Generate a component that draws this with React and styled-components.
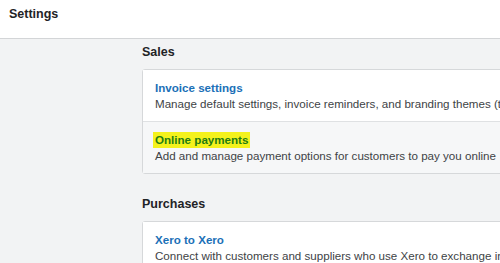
import React from "react";
import styled, { createGlobalStyle } from "styled-components";

const GlobalStyle = createGlobalStyle`
  html, body {
    margin: 0;
    padding: 0;
    overflow: hidden;
    background: #f2f3f4;
  }
  body {
    font-family: "Liberation Sans", Arial, sans-serif;
  }
`;

const sections = [
  {
    name: "Sales",
    items: [
      {
        title: "Invoice settings",
        text: "Manage default settings, invoice reminders, and branding themes (to customise invoice layouts)",
      },
      {
        title: "Online payments",
        text: "Add and manage payment options for customers to pay you online",
        active: true,
      },
    ],
  },
  {
    name: "Purchases",
    items: [
      {
        title: "Xero to Xero",
        text: "Connect with customers and suppliers who use Xero to exchange invoices and bills",
      },
    ],
  },
];

function App() {
  return (
    <Page>
      <GlobalStyle />
      <Header>
        <PageTitle>Settings</PageTitle>
      </Header>
      <Main>
        {sections.map((section) => (
          <Section key={section.name}>
            <SectionTitle>{section.name}</SectionTitle>
            <Card>
              {section.items.map((item) => (
                <Row key={item.title} $active={item.active}>
                  <RowTitle $highlight={item.active}>{item.title}</RowTitle>
                  <RowText>{item.text}</RowText>
                </Row>
              ))}
            </Card>
          </Section>
        ))}
      </Main>
    </Page>
  );
}

export default App;

const Page = styled.div`
  width: 500px;
  height: 263px;
  overflow: hidden;
  background: #f2f3f4;
`;

const Header = styled.header`
  height: 38px;
  background: #fff;
  border-bottom: 1px solid #d3d5d7;
  padding-left: 9px;
  display: flex;
  align-items: flex-start;
`;

const PageTitle = styled.h1`
  margin: 0;
  padding-top: 6px;
  font-size: 12.5px;
  line-height: 17px;
  font-weight: 700;
  color: #1f2326;
`;

const Main = styled.main`
  padding: 5px 0 0 142px;
  display: flex;
  flex-direction: column;
  gap: 22px;
`;

const Section = styled.section`
  display: flex;
  flex-direction: column;
  gap: 8px;
`;

const SectionTitle = styled.h2`
  margin: 0;
  font-size: 12.5px;
  line-height: 17px;
  font-weight: 700;
  color: #1f2326;
`;

const Card = styled.div`
  width: 520px;
  background: #fff;
  border: 1px solid #d6d8da;
  border-radius: 3px;
`;

const Row = styled.div`
  display: flex;
  flex-direction: column;
  align-items: flex-start;
  padding: 10px 12px 9px;
  background: ${(p) => (p.$active ? "#f6f7f8" : "#fff")};
  & + & {
    border-top: 1px solid #dfe1e3;
  }
`;

const RowTitle = styled.div`
  font-size: 11.6px;
  line-height: 16px;
  font-weight: 700;
  color: ${(p) => (p.$highlight ? "#1f7d12" : "#1b70b7")};
  background: ${(p) => (p.$highlight ? "#f4f21c" : "transparent")};
  padding: ${(p) => (p.$highlight ? "0 2px" : "0")};
  margin-left: ${(p) => (p.$highlight ? "-2px" : "0")};
`;

const RowText = styled.div`
  font-size: 11.6px;
  line-height: 16px;
  color: #404346;
  white-space: nowrap;
`;
